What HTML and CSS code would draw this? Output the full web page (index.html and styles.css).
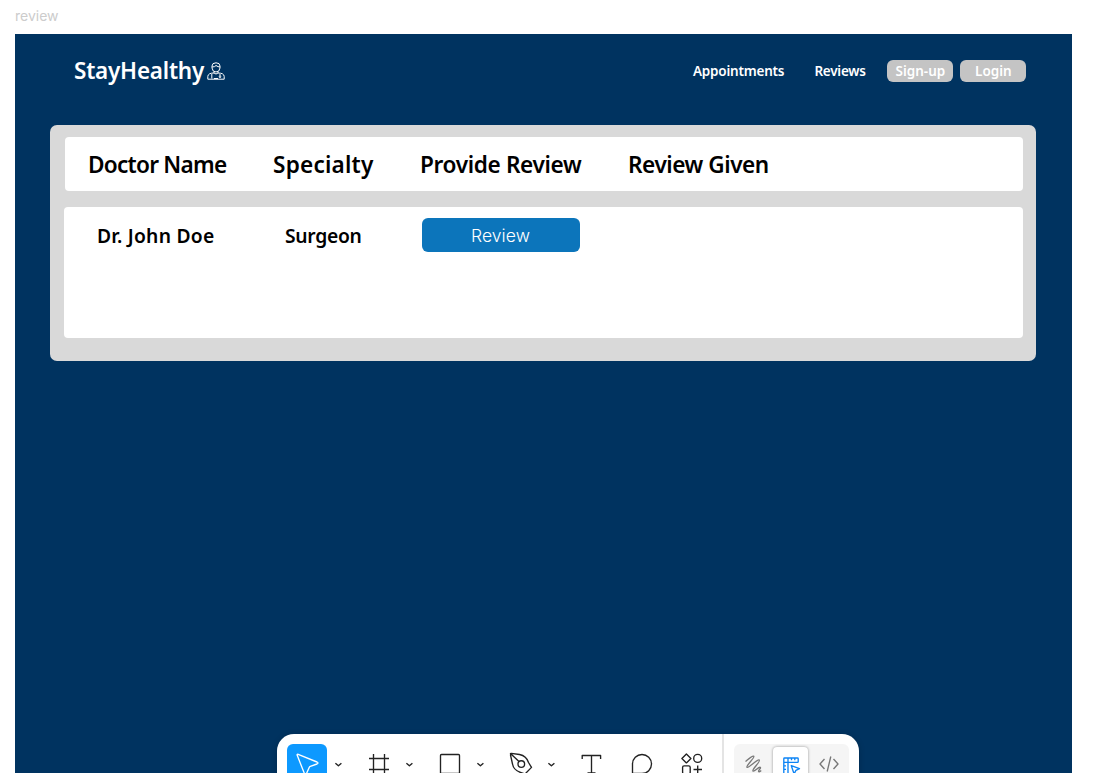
FILE: index.html
```html
<!DOCTYPE html>
<html lang="en">
<head>
<meta charset="utf-8">
<title>review</title>
<link rel="stylesheet" href="styles.css">
</head>
<body>
<div class="frame-label">review</div>
<main class="frame">
  <header class="header">
    <div class="brand"><span class="brand-name">StayHealthy</span>
      <svg class="doctor" viewBox="0 0 18 18" fill="none" stroke="#fff" stroke-width="1"><path d="M5 6V4Q5 .8 9 .8Q13 .8 13 4V6Q12.5 10 9 10Q5.5 10 5 6ZM5 5Q8 5 9 3.5Q11 5 13 5M7 9.5V11L9 12L11 11V9.5M7 11Q1 11 .8 14.5V17.2H17.2V14.5Q17 11 11 11M4.8 12V16.5M13 12V14M7 16.5H11"/><circle cx="13" cy="14.8" r=".8"/></svg>
    </div>
    <nav class="nav">
      <a class="nav-link appointments">Appointments</a>
      <a class="nav-link reviews">Reviews</a>
      <a class="pill signup">Sign-up</a>
      <a class="pill login">Login</a>
    </nav>
  </header>
  <section class="panel">
    <div class="row head">
      <div class="h-doctor">Doctor Name</div><div class="h-spec">Specialty</div><div class="h-provide">Provide Review</div><div class="h-given">Review Given</div>
    </div>
    <div class="row data">
      <div class="d-name">Dr. John Doe</div><div class="d-spec">Surgeon</div><button class="review-btn">Review</button>
    </div>
  </section>
</main>
<div class="toolbar">
  <div class="tool selected"><svg viewBox="0 0 40 40"><path d="M11.2 10.4Q9.7 9.8 10.3 11.6L17.6 30Q18.5 31.8 19.3 30L22.2 23.4Q22.5 22.7 23.3 22.4L30 20Q32 19 30 18Z"/></svg></div>
  <svg class="chevron" viewBox="0 0 22 40"><path d="M8.4 19.2L11.4 21.8L14.4 19.2"/></svg>
  <div class="tool first"><svg viewBox="0 0 40 40"><path d="M14.5 10V30M25.5 10V30M10 14.5H30M10 25.5H30"/></svg></div>
  <svg class="chevron" viewBox="0 0 22 40"><path d="M7.4 19.2L10.4 21.8L13.4 19.2"/></svg>
  <div class="tool"><svg viewBox="0 0 40 40"><rect x="10.5" y="10.5" width="19" height="19" rx="1"/></svg></div>
  <svg class="chevron" viewBox="0 0 22 40"><path d="M7.4 19.2L10.4 21.8L13.4 19.2"/></svg>
  <div class="tool"><svg viewBox="0 0 40 40"><path d="M9.8 10Q9 9.3 10.3 9.3L18.5 10.5Q25.5 12 27.5 18.5L30.5 23.4L24 30L19.5 28.5Q12.5 26 11.5 20L9.5 11ZM10 10L18 17.5"/><circle cx="20.3" cy="20" r="3.3"/></svg></div>
  <svg class="chevron" viewBox="0 0 22 40"><path d="M7.4 19.2L10.4 21.8L13.4 19.2"/></svg>
  <div class="tool"><svg viewBox="0 0 40 40"><path d="M10.2 15V11.5H28.6V15M19.5 11.5V29M15.5 29H23.5"/></svg></div>
  <div class="tool"><svg viewBox="0 0 40 40"><path d="M10.5 29.5V20A9.5 9.5 0 1 1 20 29.5Z"/></svg></div>
  <div class="tool"><svg viewBox="0 0 40 40"><path d="M14.4 9.9L18.9 14.4L14.4 18.9L9.9 14.4ZM21.5 25.5H30M25.7 21.4V30"/><circle cx="25.7" cy="14.4" r="4"/><rect x="10.6" y="21.8" width="7.6" height="8" rx="1.5"/></svg></div>
  <div class="divider"></div>
  <div class="modes">
    <svg class="mode" viewBox="0 0 38 40"><path d="M11.5 17.5C14 15.5 18.5 11 19.8 12.2C21.3 13.6 11.5 21.8 13 23.2C14.5 24.7 23.5 14.5 25.2 16C27 17.6 17.5 25.5 19 27C20.3 28.2 24.6 22.5 26.2 23.3C27.6 24 23.6 26.8 24.8 27.6C25.6 28.1 26.5 27.3 27.2 26.6"/></svg>
    <div class="mode active"><svg viewBox="0 0 36 38"><path d="M11.8 26V11.7Q11.8 11 12.5 11H25.5Q26.2 11 26.2 11.7V14.7Q26.2 15.4 25.5 15.4H16V26Q16 26.7 15.3 26.7H12.5Q11.8 26.7 11.8 26ZM16 11V15.4H11.8M19.5 11V13.2M22.8 11V13.2M11.8 18.8H14M11.8 22.3H14M19.3 18.7L27.5 21.6L23.9 23.4L22.1 27Z"/></svg></div>
    <svg class="mode" viewBox="0 0 38 40"><path d="M14.5 15L10 20L14.5 25M23.5 15L28 20L23.5 25M20.8 12.5L17.2 27.5"/></svg>
  </div>
</div>
</body>
</html>
```
FILE: styles.css
```css
* { box-sizing: border-box; }
body { margin: 0; width: 1099px; height: 773px; overflow: hidden; background: #fff; position: relative; font-family: "Noto Sans", sans-serif; }
.frame-label { height: 34px; padding: 7px 0 0 15px; font: 14px/17px Inter, sans-serif; color: #ccc; }
.frame { width: 1057.4px; height: 739px; margin-left: 15px; background: #003360; }
.header { height: 91px; padding: 19.5px 46px 0 59px; display: flex; justify-content: space-between; align-items: flex-start; color: #fff; font-weight: 600; }
.brand { display: flex; align-items: center; height: 34px; }
.brand-name { width: 133px; font-size: 22.5px; line-height: 34px; letter-spacing: -.22px; white-space: nowrap; }
.doctor { width: 18px; height: 18px; }
.nav { display: flex; align-items: center; height: 34px; font-size: 13.5px; white-space: nowrap; }
.appointments { width: 121.5px; letter-spacing: -.2px; }
.reviews { width: 73px; letter-spacing: -.25px; }
.pill { height: 22px; width: 66px; line-height: 23px; border-radius: 6px; background: #c4c4c4; text-align: center; }
.login { margin-left: 7px; }
.panel { width: 986.3px; height: 236.3px; margin-left: 35px; padding: 12px 14px 0; background: #d9d9d9; border-radius: 7px; }
.row { width: 958.5px; display: flex; background: #fff; border-radius: 4px; color: #000; font-weight: 600; white-space: nowrap; }
.head { height: 54px; margin-left: .5px; padding-left: 23.5px; font-size: 22.6px; line-height: 56px; }
.h-doctor { width: 185px; letter-spacing: -.75px; }
.h-spec { width: 147px; letter-spacing: .2px; }
.h-provide { width: 208px; letter-spacing: -.35px; }
.h-given { letter-spacing: -.45px; }
.data { height: 131px; margin-top: 15.5px; padding: 11px 0 0 33px; font-size: 19.3px; line-height: 36px; }
.d-name { width: 188px; letter-spacing: .25px; }
.d-spec { width: 136.5px; letter-spacing: -.3px; }
.review-btn { width: 158px; height: 34px; padding: 0; border: 0; border-radius: 6px; background: #0c75bb; color: #fff; font: 350 17.5px/36px Inter, sans-serif; letter-spacing: .1px; }
.toolbar { position: absolute; left: 277px; top: 734px; width: 582px; height: 60px; padding: 10px; display: flex; border-radius: 17px; background: #fff; box-shadow: 0 1px 6px #0003; }
.toolbar svg { fill: none; stroke: #222; stroke-width: 1.35; stroke-linejoin: round; flex: none; }
.tool { width: 40px; height: 40px; margin-right: 10px; flex: none; }
.tool svg { display: block; width: 40px; height: 40px; }
.tool:has(+ .chevron) { margin-right: 0; }
.selected { background: #0d99ff; border-radius: 6px; }
.toolbar .selected svg { stroke: #fff; }
.chevron { width: 22px; height: 40px; margin-right: 9px; }
.selected + .chevron { margin-right: 10px; }
.divider { width: 2px; height: 60px; margin: -10px 0 0 -.5px; background: #e4e4e4; flex: none; }
.modes { width: 115px; height: 40px; margin-left: 10.5px; display: flex; background: #f5f5f5; border-radius: 6px; flex: none; }
.toolbar .modes .mode { width: 38px; height: 40px; stroke: #777; flex: none; }
.toolbar .modes .active { width: 35px; height: 37px; margin: 2.5px 2px 0 1px; background: #fff; border-radius: 4px; box-shadow: 0 0 3px #0006; }
.toolbar .active svg { display: block; width: 36px; height: 38px; margin-left: -1px; stroke: #0d84f5; }
```
